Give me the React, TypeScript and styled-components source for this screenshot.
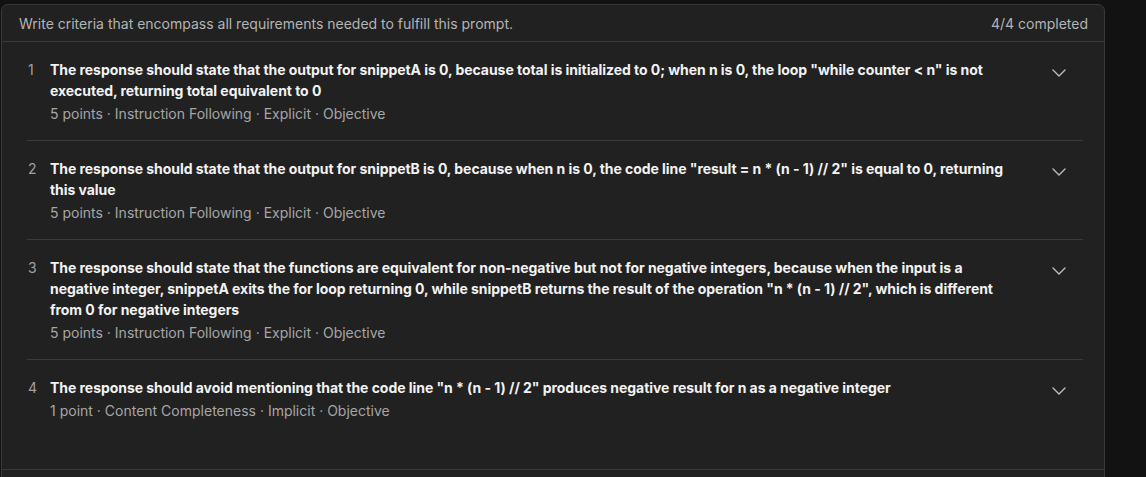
import React from 'react';
import styled, { createGlobalStyle } from 'styled-components';

interface Criterion {
  id: number;
  title: string;
  points: number;
  category: string;
  kind: string;
  nature: string;
}

const criteria: Criterion[] = [
  {
    id: 1,
    title:
      'The response should state that the output for snippetA is 0, because total is initialized to 0; when n is 0, the loop "while counter < n" is not executed, returning total equivalent to 0',
    points: 5,
    category: 'Instruction Following',
    kind: 'Explicit',
    nature: 'Objective',
  },
  {
    id: 2,
    title:
      'The response should state that the output for snippetB is 0, because when n is 0, the code line "result = n * (n - 1) // 2" is equal to 0, returning this value',
    points: 5,
    category: 'Instruction Following',
    kind: 'Explicit',
    nature: 'Objective',
  },
  {
    id: 3,
    title:
      'The response should state that the functions are equivalent for non-negative but not for negative integers, because when the input is a negative integer, snippetA exits the for loop returning 0, while snippetB returns the result of the operation "n * (n - 1) // 2", which is different from 0 for negative integers',
    points: 5,
    category: 'Instruction Following',
    kind: 'Explicit',
    nature: 'Objective',
  },
  {
    id: 4,
    title:
      'The response should avoid mentioning that the code line "n * (n - 1) // 2" produces negative result for n as a negative integer',
    points: 1,
    category: 'Content Completeness',
    kind: 'Implicit',
    nature: 'Objective',
  },
];

const GlobalStyle = createGlobalStyle`
  body {
    margin: 0;
    background: #121212;
    font-family: Inter, "Liberation Sans", sans-serif;
  }
`;

const Chevron = () => (
  <svg width="14" height="8" viewBox="0 0 14 8" fill="none">
    <path d="M1 1l6 6 6-6" stroke="#bdbdbd" strokeWidth="1.4" strokeLinecap="round" strokeLinejoin="round" />
  </svg>
);

const App: React.FC = () => {
  const done = criteria.length;
  return (
    <>
      <GlobalStyle />
      <Page>
        <Panel>
          <Header>
            <span>Write criteria that encompass all requirements needed to fulfill this prompt.</span>
            <span>
              {done}/{criteria.length} completed
            </span>
          </Header>
          <List>
            {criteria.map((c) => (
              <Row key={c.id}>
                <Num>{c.id}</Num>
                <Body>
                  <Title>{c.title}</Title>
                  <Meta>
                    {c.points} {c.points === 1 ? 'point' : 'points'} · {c.category} · {c.kind} · {c.nature}
                  </Meta>
                </Body>
                <Toggle>
                  <Chevron />
                </Toggle>
              </Row>
            ))}
          </List>
          <Footer />
        </Panel>
      </Page>
    </>
  );
};

export default App;

const Page = styled.div`
  padding: 4px 0 0 1px;
  height: 473px;
  overflow: hidden;
`;

const Panel = styled.div`
  width: 1104px;
  background: #212121;
  border: 1px solid #393939;
  border-radius: 7px;
  box-sizing: border-box;
`;

const Header = styled.div`
  height: 36px;
  display: flex;
  align-items: center;
  justify-content: space-between;
  padding: 0 16px 0 17px;
  border-bottom: 1px solid #3a3a3a;
  font-size: 14px;
  color: #b4b4b4;
`;

const List = styled.div`
  padding: 0 21px 32px 25px;
`;

const Row = styled.div`
  display: flex;
  align-items: flex-start;
  padding: 17px 0 16px;
  border-bottom: 1px solid #3a3a3a;

  &:last-child {
    border-bottom: none;
  }
`;

const Num = styled.div`
  min-width: 9px;
  margin: 0 13px 0 1px;
  font-size: 14px;
  line-height: 21px;
  color: #a0a0a0;
`;

const Body = styled.div`
  flex: 1;
  padding-right: 26px;
`;

const Title = styled.div`
  font-size: 14px;
  line-height: 21px;
  font-weight: 700;
  color: #f2f2f2;
  letter-spacing: -0.05px;
`;

const Meta = styled.div`
  margin-top: 3px;
  font-size: 14px;
  line-height: 20px;
  color: #a6a6a6;
`;

const Toggle = styled.div`
  width: 24px;
  height: 24px;
  margin-right: 12px;
  display: flex;
  align-items: center;
  justify-content: center;
  padding-top: 2px;
`;

const Footer = styled.div`
  height: 20px;
  border-top: 1px solid #3a3a3a;
`;
